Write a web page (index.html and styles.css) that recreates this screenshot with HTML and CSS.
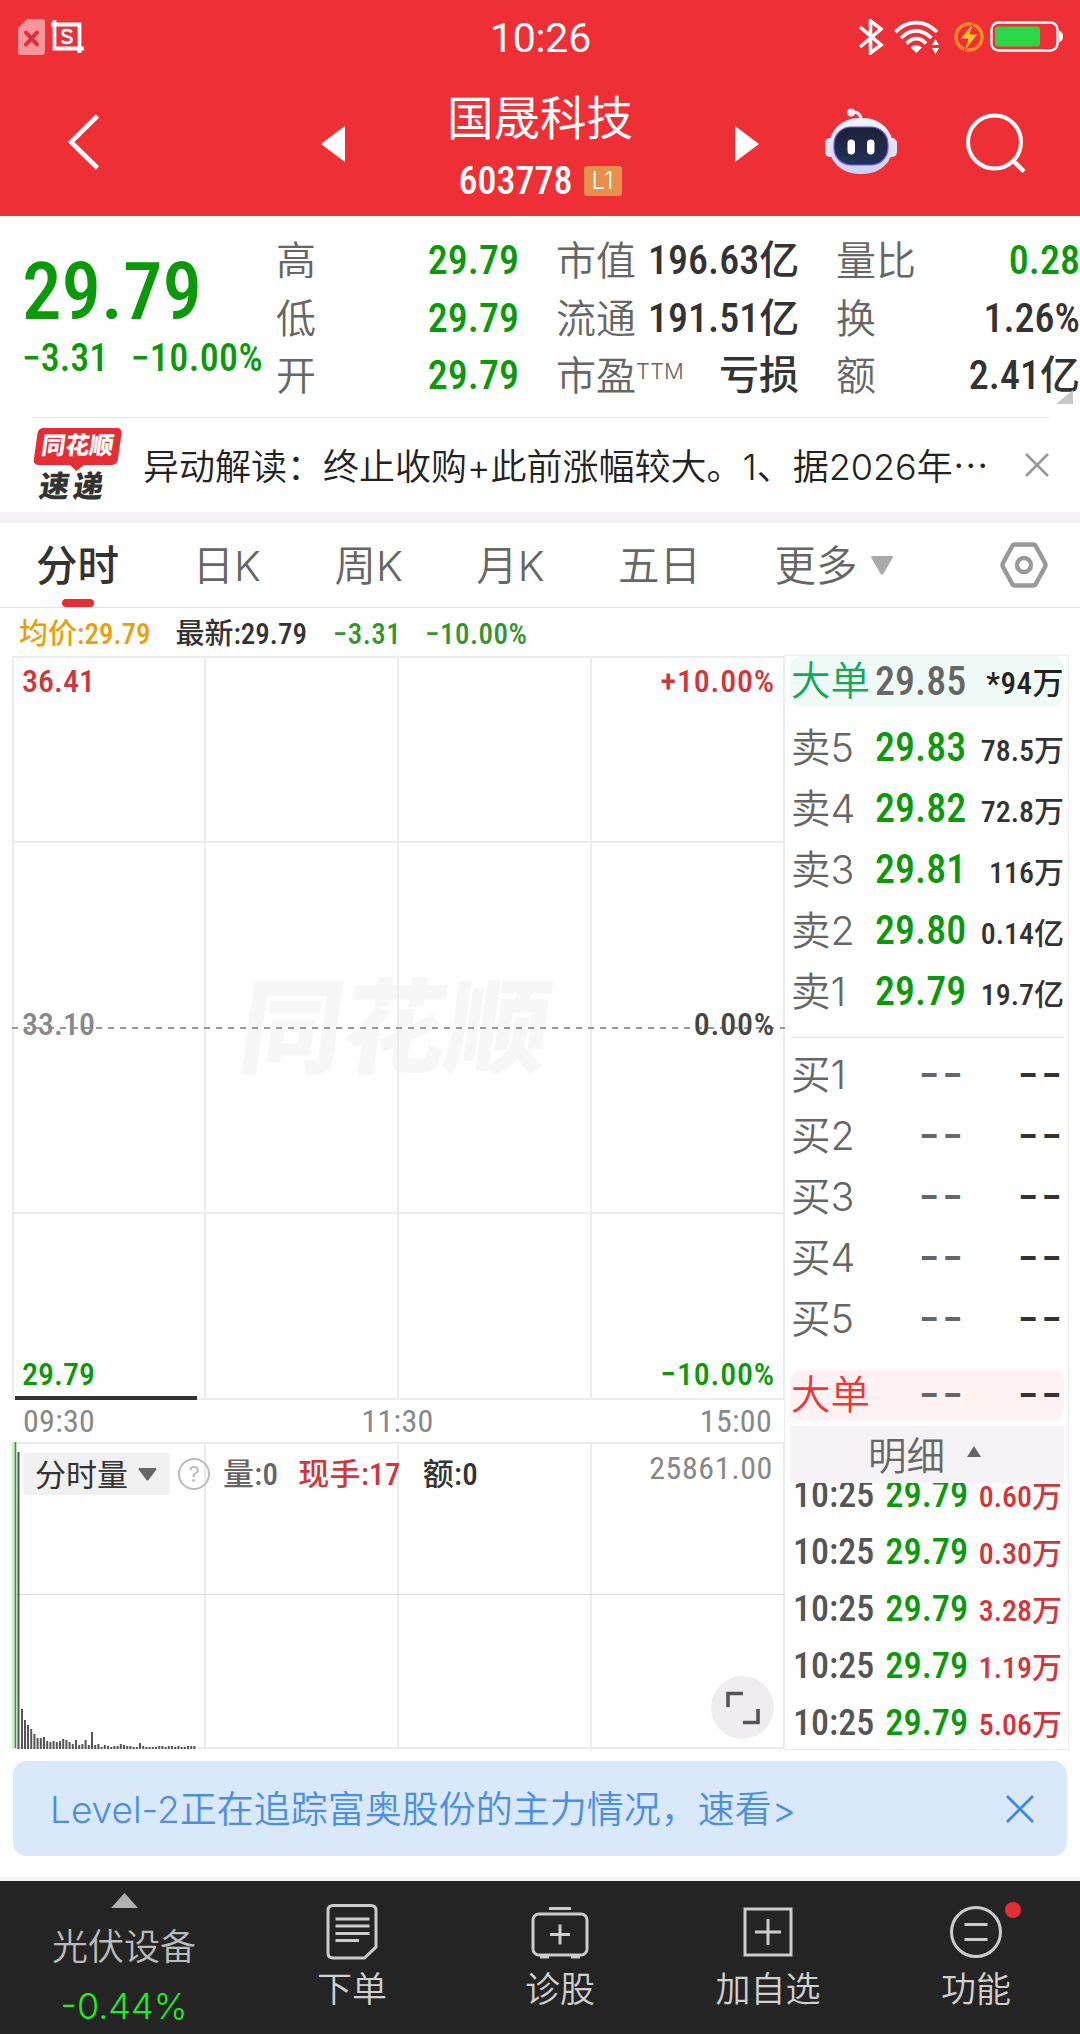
FILE: index.html
```html
<!DOCTYPE html>
<html lang="zh-CN">

<head>
    <meta charset="UTF-8">
    <title>国晟科技 603778</title>
    <link rel="stylesheet" href="styles.css">
</head>

<body>
    <header class="top">
        <div class="status">
            <div class="status-left">
                <svg width="27" height="36" viewBox="0 0 27 36">
                    <path d="M9 0H24a3 3 0 0 1 3 3V33a3 3 0 0 1-3 3H3a3 3 0 0 1-3-3V9z" fill="#f9959a" />
                    <path d="M8 13.500L19 25.500M19 13.500L8 25.500" stroke="#e02c37" stroke-width="4" stroke-linecap="round" />
                </svg>
                <svg width="34" height="34" viewBox="0 0 34 34">
                    <path d="M3.500 0V28.500H33M0 4.500H28.500V33" fill="none" stroke="#fff" stroke-width="3.800" />
                    <path d="M20.500 12.500C19.500 9.500 11.500 9 11.500 13C11.500 17.500 20.500 15.500 20.500 19.500C20.500 24 12 23.500 11 20.500" fill="none" stroke="#fff" stroke-width="2.800" />
                </svg>
            </div>
            <div class="clock">10:26</div>
            <div class="status-right">
                <svg width="26" height="36" viewBox="0 0 26 36">
                    <path d="M2 8L23 26L12.500 34V2L23 10L2 28" fill="none" stroke="#fff" stroke-width="3.600" />
                </svg>
                <svg class="wifi" width="46" height="34" viewBox="0 0 46 34">
                    <g fill="none" stroke="#fff" stroke-width="3.600">
                        <path d="M1.500 12C13-.5 31-.5 43 12" />
                        <path d="M7 18C16 8.500 28 8.500 37.500 18" />
                        <path d="M12.500 23.500C19 17 26 17 32 23.500" />
                    </g>
                    <path d="M16.500 27.500Q22 23 28 27.500L22.300 33z" fill="#fff" />
                    <path d="M38 25L41.500 19L45 25zM38 28L41.500 34L45 28z" fill="#fff" />
                </svg>
                <svg class="bolt" width="30" height="32" viewBox="0 0 30 32">
                    <circle cx="15" cy="16" r="13" fill="none" stroke="#f98a26" stroke-width="3.500" />
                    <path d="M20 1L6 18H14L10 31L24 13H16z" fill="#ffc425" stroke="#ee2f36" stroke-width="1" />
                </svg>
                <svg width="73" height="32" viewBox="0 0 73 32">
                    <rect x="1.500" y="1.500" width="66" height="28" rx="7" fill="none" stroke="#fff" stroke-width="2.400" />
                    <rect x="5" y="5.500" width="45" height="20" rx="3" fill="#2bd744" />
                    <path d="M69 9.500Q73 11 73 15.500Q73 20 69 21.500z" fill="#fff" />
                </svg>
            </div>
        </div>
        <div class="nav">
            <svg class="back" width="32" height="56" viewBox="0 0 32 56">
                <path d="M29.500 2L3 28L29.500 54" fill="none" stroke="#fff" stroke-width="4.600" />
            </svg>
            <svg class="prev" width="24" height="36" viewBox="0 0 24 36">
                <path d="M24 0V36L0 18z" fill="#fff" />
            </svg>
            <div class="stock">
                <h1 class="name">国晟科技</h1>
                <div class="code"><span class="num">603778</span><span class="level">L1</span></div>
            </div>
            <svg class="next" width="24" height="36" viewBox="0 0 24 36">
                <path d="M0 0V36L24 18z" fill="#fff" />
            </svg>
            <svg class="robot" width="72" height="67" viewBox="0 0 72 67">
                <defs>
                    <linearGradient id="shell" x1="0" y1="0" x2="0" y2="1">
                        <stop offset="0" stop-color="#f6f3fc" />
                        <stop offset="1" stop-color="#ccd0f4" />
                    </linearGradient>
                    <linearGradient id="face" x1="0" y1="0" x2="0" y2="1">
                        <stop offset="0" stop-color="#1e2038" />
                        <stop offset="1" stop-color="#22305a" />
                    </linearGradient>
                </defs>
                <circle cx="26" cy="4.500" r="4" fill="#f3ecf8" />
                <path d="M27 4Q35 3 36.500 12" fill="none" stroke="#f3ecf8" stroke-width="3" />
                <rect x="0" y="30" width="12" height="19" rx="5" fill="#e6e3f7" />
                <rect x="60" y="30" width="12" height="19" rx="5" fill="#e6e3f7" />
                <rect x="4" y="10" width="64" height="56" rx="29" fill="url(#shell)" />
                <rect x="9" y="19" width="54" height="38" rx="17" fill="url(#face)" stroke="#7261d8" stroke-width="1.200" />
                <rect x="22.500" y="31.500" width="7.500" height="15" rx="3.700" fill="#fff" />
                <rect x="42" y="31.500" width="7.500" height="15" rx="3.700" fill="#fff" />
            </svg>
            <svg class="search" width="60" height="60" viewBox="0 0 60 60">
                <circle cx="28.500" cy="29" r="26.500" fill="none" stroke="#fff" stroke-width="4" />
                <path d="M47 47.500L58 58.500" stroke="#fff" stroke-width="4.500" />
            </svg>
        </div>
    </header>

    <section class="quote">
        <div class="price">
            <div class="last num">29.79</div>
            <div class="change num"><span>−3.31</span><span>−10.00%</span></div>
        </div>
        <dl class="stats">
            <dt>高</dt><dd class="down">29.79</dd>
            <dt>市值</dt><dd>196.63亿</dd>
            <dt>量比</dt><dd class="down">0.28</dd>
            <dt>低</dt><dd class="down">29.79</dd>
            <dt>流通</dt><dd>191.51亿</dd>
            <dt>换</dt><dd>1.26%</dd>
            <dt>开</dt><dd class="down">29.79</dd>
            <dt>市盈<span class="ttm">TTM</span></dt><dd>亏损</dd>
            <dt>额</dt><dd>2.41亿</dd>
        </dl>
        <svg class="corner" width="17" height="14" viewBox="0 0 17 14">
            <path d="M17 0V14H0z" fill="#c8c8c8" />
        </svg>
    </section>

    <section class="news">
        <div class="news-logo">
            <div class="bubble">同花顺</div>
            <div class="express">速递</div>
        </div>
        <p class="news-text">异动解读：终止收购+此前涨幅较大。1、据2026年<span class="dots">…</span></p>
        <svg class="news-close" width="24" height="24" viewBox="0 0 24 24">
            <path d="M1 1L23 23M23 1L1 23" stroke="#999" stroke-width="2.600" />
        </svg>
    </section>

    <nav class="tabs">
        <div class="tab active">分时</div>
        <div class="tab">日K</div>
        <div class="tab">周K</div>
        <div class="tab">月K</div>
        <div class="tab">五日</div>
        <div class="tab">更多</div>
        <svg class="more" width="24" height="19" viewBox="0 0 24 19">
            <path d="M2 1H22L12.800 17Q12 18.500 11.200 17z" fill="#aaa" stroke="#aaa" stroke-width="2" stroke-linejoin="round" />
        </svg>
        <svg class="setting" width="48" height="46" viewBox="0 0 48 46">
            <path d="M15 2.500H33Q35 2.500 36 4.500L45 21Q46 23 45 25L36 41.500Q35 43.500 33 43.500H15Q13 43.500 12 41.500L3 25Q2 23 3 21L12 4.500Q13 2.500 15 2.500z" fill="none" stroke="#999" stroke-width="4.400" />
            <circle cx="24" cy="23" r="7" fill="none" stroke="#999" stroke-width="4.400" />
        </svg>
    </nav>

    <main class="board">
        <div class="charts">
            <div class="legend">
                <span class="avg">均价:29.79</span>
                <span class="latest">最新:29.79</span>
                <span class="diff">−3.31</span>
                <span class="diff">−10.00%</span>
            </div>
            <div class="chart minute">
                <svg class="lines" width="774" height="744" viewBox="0 0 774 744">
                    <path d="M1 0V744M193 0V744M386 0V744M579 0V744M772 0V744M0 1H773M0 186H773M0 557H773M0 743H773" stroke="#ececec" stroke-width="2" />
                    <path d="M0 372H773" stroke="#999" stroke-width="2" stroke-dasharray="6 6" />
                    <path d="M3 742H185" stroke="#333" stroke-width="4" />
                </svg>
                <div class="watermark">同花顺</div>
                <div class="scale up"><span>36.41</span><span>+10.00%</span></div>
                <div class="scale mid"><span class="base">33.10</span><span>0.00%</span></div>
                <div class="scale down"><span>29.79</span><span>−10.00%</span></div>
            </div>
            <div class="times"><span>09:30</span><span>11:30</span><span>15:00</span></div>
            <div class="chart volume">
                <svg class="lines" width="774" height="308" viewBox="0 0 774 308">
                    <path d="M1 0V308M193 0V308M386 0V308M579 0V308M772 0V308M0 1H773M0 306H773" stroke="#ececec" stroke-width="2" />
                    <path d="M0 152.500H773" stroke="#ddd" stroke-width="1" />
                    <path d="M2 0V306" stroke="#c4f5b8" stroke-width="4" />
                    <path d="M3.500 0V306" stroke="#3d8f3d" stroke-width="1.600" />
                    <path d="M6.500 10V307M10 267v40M13 278v29M16 283v24M19.200 287v20M22.400 292v15M25.600 296v11M28.800 296v11M32 295v12M35.200 299v8M38.400 300v7M41.600 299v8M44.800 300v7M48 299v8M51.200 297v10M54.400 298v9M57.600 300v7M60.800 302v5M64 298v9M67.200 303v4M70.400 302v5M73.600 298v9M76.800 303v4M80 290v17M83.200 303v4M86.400 302v5M89.600 305v2M92.800 303v4M96 304v3M99.200 305v2M102.400 304v3M105.600 304v3M108.800 302v5M112 303v4M115.200 304v3M118.400 304v3M121.600 305v2M124.800 305v2M128 301v6M131.200 304v3M134.400 305v2M137.600 305v2M140.800 305v2M144 305v2M147.200 304v3M150.400 304v3M153.600 305v2M156.800 304v3M160 304v3M163.200 305v2M166.400 304v3M169.600 305v2M172.800 305v2M176 304v3M179.200 304v3M182.400 304v3" stroke="#555" stroke-width="2" />
                </svg>
                <div class="volume-head">
                    <div class="picker">分时量<svg width="19" height="13" viewBox="0 0 19 13">
                            <path d="M1 0H18Q19 1 18 2L10.500 12Q9.500 13 8.500 12L1 2Q0 1 1 0z" fill="#666" />
                        </svg></div>
                    <div class="help">?</div>
                    <span class="amount">量:0</span>
                    <span class="hand">现手:17</span>
                    <span class="total">额:0</span>
                    <span class="max">25861.00</span>
                </div>
                <div class="expand">
                    <svg width="34" height="34" viewBox="0 0 34 34">
                        <path d="M2 16V2.500H17M32 18V31.500H17" fill="none" stroke="#555" stroke-width="3.600" />
                    </svg>
                </div>
            </div>
        </div>

        <aside class="book">
            <div class="row big sell"><span>大单</span><b>29.85</b><i>*94万</i></div>
            <div class="asks">
                <div class="row"><span>卖5</span><b>29.83</b><i>78.5万</i></div>
                <div class="row"><span>卖4</span><b>29.82</b><i>72.8万</i></div>
                <div class="row"><span>卖3</span><b>29.81</b><i>116万</i></div>
                <div class="row"><span>卖2</span><b>29.80</b><i>0.14亿</i></div>
                <div class="row"><span>卖1</span><b>29.79</b><i>19.7亿</i></div>
            </div>
            <div class="bids">
                <div class="row none"><span>买1</span><b>−−</b><i>−−</i></div>
                <div class="row none"><span>买2</span><b>−−</b><i>−−</i></div>
                <div class="row none"><span>买3</span><b>−−</b><i>−−</i></div>
                <div class="row none"><span>买4</span><b>−−</b><i>−−</i></div>
                <div class="row none"><span>买5</span><b>−−</b><i>−−</i></div>
            </div>
            <div class="row none big buy"><span>大单</span><b>−−</b><i>−−</i></div>
            <div class="detail">明细<svg width="14" height="11" viewBox="0 0 14 11">
                    <path d="M7 0L14 11H0z" fill="#666" />
                </svg></div>
            <div class="deals">
                <div class="deal"><span>10:25</span><b>29.79</b><i>0.60万</i></div>
                <div class="deal"><span>10:25</span><b>29.79</b><i>0.30万</i></div>
                <div class="deal"><span>10:25</span><b>29.79</b><i>3.28万</i></div>
                <div class="deal"><span>10:25</span><b>29.79</b><i>1.19万</i></div>
                <div class="deal"><span>10:25</span><b>29.79</b><i>5.06万</i></div>
            </div>
        </aside>
    </main>

    <div class="banner">
        <span>Level-2正在追踪富奥股份的主力情况，速看&gt;</span>
        <svg width="28" height="28" viewBox="0 0 28 28">
            <path d="M1 1L27 27M27 1L1 27" stroke="#3f86e4" stroke-width="2.800" />
        </svg>
    </div>

    <footer class="bottom">
        <div class="sector">
            <svg width="27" height="15" viewBox="0 0 27 15">
                <path d="M13.500 0L27 15H0z" fill="#b0b0b0" />
            </svg>
            <div class="sector-name">光伏设备</div>
            <div class="sector-rate">-0.44%</div>
        </div>
        <div class="item">
            <svg width="56" height="56" viewBox="0 0 56 56">
                <path d="M9 1.500H47Q52 1.500 52 6.500V43L40.500 54H9Q4 54 4 49V6.500Q4 1.500 9 1.500z" />
                <path d="M11.500 15H45.500M11.500 22H45.500M11.500 29.500H45.500M11.500 36.500H35" />
            </svg>
            <span>下单</span>
        </div>
        <div class="item">
            <svg width="60" height="56" viewBox="0 0 60 56">
                <rect x="3" y="10" width="54" height="41" rx="6" />
                <path d="M19 4.500H41M30 20.500V40.500M20 30.500H40M10 53H19M41 53H50" />
            </svg>
            <span>诊股</span>
        </div>
        <div class="item">
            <svg width="56" height="56" viewBox="0 0 56 56">
                <rect x="5" y="5" width="46" height="46" />
                <path d="M28 15V41M15 28H41" />
            </svg>
            <span>加自选</span>
        </div>
        <div class="item">
            <svg width="56" height="56" viewBox="0 0 56 56">
                <circle cx="28" cy="28" r="24.500" />
                <path d="M16.500 20.500H39.500M16.500 35.500H39.500" />
            </svg>
            <span>功能</span>
            <div class="dot"></div>
        </div>
    </footer>
</body>

</html>
```
FILE: styles.css
```css
* {
    box-sizing: border-box;
}

body {
    margin: 0;
    width: 1080px;
    height: 2034px;
    overflow: hidden;
    background: #fff;
    color: #333;
    font-family: Inter, "Noto Sans CJK SC", sans-serif;
}

svg {
    display: block;
    flex: none;
}

b,
i {
    font-weight: inherit;
    font-style: normal;
}

.num,
.stats dd,
.legend,
.scale,
.times,
.volume-head,
.row b,
.row i,
.deal {
    font-family: "Roboto Condensed", "Noto Sans CJK SC", sans-serif;
    font-weight: 500;
}

/* header */
.top {
    height: 216px;
    background: #ee2f36;
    color: #fff;
}

.status {
    height: 75px;
    padding: 0 17px 0 18px;
    display: grid;
    grid-template-columns: 1fr auto 1fr;
    align-items: center;
}

.status-left,
.status-right {
    display: flex;
    align-items: center;
    gap: 6px;
    margin-top: -2px;
}

.status-right {
    justify-content: flex-end;
}

.wifi {
    margin-left: 4px;
}

.bolt {
    margin-left: 8px;
}

.clock {
    font-family: Roboto;
    font-size: 41px;
    letter-spacing: -.2px;
}

.nav {
    height: 141px;
    display: flex;
    align-items: flex-start;
}

.back {
    margin: 39px 0 0 68px;
}

.prev {
    margin: 51px 0 0 221px;
}

.stock {
    width: 390px;
    text-align: center;
}

.name {
    margin: 12px 0 0;
    font-size: 46.500px;
    font-weight: 400;
    line-height: 62px;
}

.code {
    display: flex;
    justify-content: center;
    align-items: center;
    gap: 11px;
    height: 34px;
    margin-top: 15px;
    font-size: 38px;
}

.level {
    width: 38px;
    height: 30px;
    border-radius: 3px;
    background: #e88f4d;
    font-size: 24px;
    font-weight: 300;
    line-height: 30px;
}

.next {
    margin-top: 51px;
}

.robot {
    margin: 33px 0 0 66px;
}

.search {
    margin: 38px 0 0 69px;
}

/* quote */
.quote {
    position: relative;
    height: 201px;
    display: flex;
}

.price {
    width: 276px;
    padding: 34px 0 0 22px;
    color: #099909;
}

.last {
    font-size: 79px;
    line-height: 84px;
}

.change {
    display: flex;
    justify-content: space-between;
    width: 241px;
    margin-top: 4px;
    font-size: 38px;
    line-height: 40px;
}

.change span + span {
    letter-spacing: .4px;
}

.stats {
    flex: 1;
    display: grid;
    grid-template-columns: 90px 153px 129px 151px 126px 1fr;
    grid-auto-rows: 57.500px;
    margin: 16px 0 0;
    line-height: 57px;
    font-size: 40px;
}

.stats dt {
    color: #666;
    font-weight: 350;
    white-space: nowrap;
}

.stats dt:nth-of-type(3n + 2) {
    margin-left: 37px;
}

.stats dt:nth-of-type(3n) {
    margin-left: 37px;
}

.stats dd {
    margin: 0;
    text-align: right;
    white-space: nowrap;
}

.stats .down {
    color: #099909;
}

.ttm {
    font-size: 22px;
    line-height: 0;
    vertical-align: 11px;
}

.corner {
    position: absolute;
    right: 7px;
    bottom: 13px;
}

/* news */
.news {
    height: 95px;
    margin: 0 31px 0 32px;
    border-top: 1px solid #e6e6e6;
    display: flex;
    align-items: center;
}

.news-logo {
    width: 84px;
    margin-left: 1px;
    text-align: center;
    font-weight: 900;
    font-size: 24px;
    transform: skewX(-8deg);
}

.bubble {
    position: relative;
    height: 37px;
    border-radius: 5px;
    background: #e62d33;
    color: #fff;
    line-height: 36px;
}

.bubble::after {
    content: "";
    position: absolute;
    left: 37px;
    top: 37px;
    border: 7px solid transparent;
    border-top: 6px solid #e62d33;
}

.express {
    margin-top: 4px;
    padding-left: 3px;
    font-size: 30px;
    line-height: 34px;
    letter-spacing: 4px;
}

.news-text {
    margin: -3px 0 0 26px;
    font-size: 36px;
    font-weight: 350;
    white-space: nowrap;
    color: #222;
}

.dots {
    font-family: "Noto Sans CJK SC";
}

.news-close {
    margin-left: auto;
}

/* tabs */
.tabs {
    height: 96px;
    display: flex;
    align-items: center;
    border-top: 11px solid #f5f3f5;
    border-bottom: 1px solid #e3e3e3;
    font-size: 41.500px;
    font-weight: 350;
    color: #666;
}

.tab {
    position: relative;
    height: 84px;
    line-height: 87px;
    margin-left: 73.500px;
    white-space: nowrap;
}

.tab.active {
    margin-left: 36px;
    color: #333;
    font-weight: 500;
}

.tab.active::after {
    content: "";
    position: absolute;
    left: 26px;
    bottom: 0;
    width: 32px;
    height: 8px;
    border-radius: 4px;
    background: #e62d33;
}

.more {
    margin-left: 12px;
}

.setting {
    margin: 0 32px 0 auto;
}

/* charts */
.board {
    display: flex;
    height: 1153px;
}

.charts {
    width: 784px;
    padding-left: 12px;
}

.legend {
    display: flex;
    height: 48px;
    padding-left: 7px;
    line-height: 52px;
    font-size: 29px;
    color: #333;
}

.legend span {
    margin-right: 26px;
}

.legend .avg {
    color: #e8a010;
    margin-right: 25px;
}

.legend .diff {
    color: #35952c;
    letter-spacing: .5px;
    margin-right: 24px;
}

.chart {
    position: relative;
}

.lines {
    position: absolute;
    left: 0;
    top: 0;
}

.minute {
    height: 744px;
    display: flex;
    flex-direction: column;
    justify-content: space-between;
    padding: 5px 9px 6px 10px;
}

.watermark {
    position: absolute;
    left: 229px;
    top: 312px;
    font-size: 103px;
    font-weight: 900;
    line-height: 120px;
    color: #f7f7f7;
    transform: skewX(-8deg);
    z-index: -1;
}

.scale {
    position: relative;
    display: flex;
    justify-content: space-between;
    font-size: 32px;
    line-height: 40px;
}

.scale span + span {
    letter-spacing: .8px;
}

.up {
    color: #d2353b;
}

.mid {
    color: #444;
    top: -4px;
}

.base {
    color: #888;
}

.scale.down {
    color: #099909;
}

.times {
    display: flex;
    justify-content: space-between;
    height: 43px;
    padding: 0 12px 0 11px;
    font-size: 32px;
    font-weight: 400;
    line-height: 43px;
    letter-spacing: .3px;
    color: #888;
}

.volume {
    height: 308px;
    margin-top: -1px;
    padding: 11px 11px 0;
}

.volume-head {
    position: relative;
    display: flex;
    align-items: center;
    height: 42px;
    font-size: 31px;
    white-space: nowrap;
}

.picker {
    display: flex;
    align-items: center;
    justify-content: space-between;
    width: 147px;
    height: 42px;
    padding: 0 13px 4px 12px;
    border-radius: 4px;
    background: #f1f1f1;
    font-weight: 400;
}

.picker svg {
    margin-top: 4px;
}

.help {
    width: 32px;
    height: 32px;
    margin: 0 13px 0 8px;
    border: 2.500px solid #bbb;
    border-radius: 50%;
    color: #bbb;
    font-family: Inter;
    font-size: 22px;
    font-weight: 400;
    line-height: 28px;
    text-align: center;
}

.amount,
.hand,
.total {
    margin-top: -6px;
    letter-spacing: .3px;
}

.amount {
    color: #666;
}

.hand {
    margin-left: 20px;
    margin-right: 22px;
    color: #d2353b;
}

.max {
    margin: -12px 0 0 auto;
    font-size: 32px;
    font-weight: 400;
    letter-spacing: .6px;
    color: #888;
}

.expand {
    position: absolute;
    right: 10px;
    bottom: 11px;
    width: 63px;
    height: 63px;
    border-radius: 50%;
    background: #efedef;
    display: grid;
    place-items: center;
}

/* order book */
.book {
    width: 285px;
    margin-top: 47px;
    height: 1095px;
    padding: 0 4px 0 5px;
    border: 1px solid #ececec;
    overflow: hidden;
}

.row {
    display: flex;
    align-items: center;
    height: 61px;
    padding: 0 1px 0 1px;
    font-size: 40px;
    white-space: nowrap;
}

.row span {
    width: 84px;
    margin-top: -6px;
    color: #666;
    font-weight: 350;
    font-size: 39.500px;
}

.row b {
    color: #099909;
    line-height: 61px;
}

.row i {
    margin: 1px -1px 0 auto;
    font-size: 30px;
}

.big {
    height: 51px;
    border-radius: 12px;
}

.big span {
    margin-top: -9px;
}

.big b {
    margin-top: -1px;
}

.sell {
    background: #f0faf6;
}

.big.sell span {
    color: #12a95c;
}

.big.sell b {
    color: #666;
}

.big.sell i {
    margin-top: -2px;
    color: #222;
    font-size: 31px;
    letter-spacing: .5px;
}

.asks {
    padding: 10px 0 15px;
    border-bottom: 1px solid #e6e6e6;
}

.bids {
    padding: 7px 0 20px;
}

.bids .row span {
    margin-top: -8px;
}

.none b {
    width: 91px;
    text-align: right;
    color: #666;
}

.none b,
.none i {
    margin-top: 0;
    font-size: 42px;
    line-height: 51px;
    letter-spacing: 3px;
}

.none i {
    margin-right: -2px;
}

.buy {
    background: #fef2f4;
}

.big.buy span {
    color: #e83a36;
}

.detail {
    height: 57px;
    margin-top: 5px;
    display: flex;
    align-items: center;
    justify-content: center;
    gap: 22px;
    padding: 0 5px 3px 0;
    background: #f5f3f5;
    color: #666;
    font-size: 38.500px;
    font-weight: 350;
}

.detail svg {
    margin-top: -3px;
}

.deals {
    height: 268px;
    overflow: hidden;
    display: flex;
    flex-direction: column;
    justify-content: flex-end;
}

.deal {
    flex: none;
    display: flex;
    align-items: baseline;
    height: 57px;
    line-height: 57px;
    padding: 0 2px 0 3px;
    font-size: 36px;
    color: #555;
    white-space: nowrap;
}

.deal b {
    margin-left: 11px;
    font-size: 36.500px;
    color: #099909;
}

.deal i {
    margin-left: auto;
    font-size: 30px;
    color: #d2353b;
}

/* banner */
.banner {
    display: flex;
    align-items: center;
    justify-content: space-between;
    height: 95px;
    margin: 0 13px;
    padding: 0 33px 0 37px;
    border-radius: 14px;
    background: #dae8fb;
    color: #4a8fe4;
    font-size: 37px;
    font-weight: 350;
}

.banner span {
    margin-top: -3px;
}

/* bottom bar */
.bottom {
    display: flex;
    height: 157px;
    margin-top: 21px;
    border-top: 4px solid #f5f5f5;
    background: #242424;
    color: #d0d0d0;
    font-weight: 350;
}

.sector {
    width: 248px;
    display: flex;
    flex-direction: column;
    align-items: center;
    padding-top: 12px;
}

.sector-name {
    margin-top: 17px;
    font-size: 36px;
    line-height: 44px;
    color: #bbb;
}

.sector-rate {
    margin-top: 15px;
    font-size: 36px;
    line-height: 44px;
    color: #20f020;
}

.item {
    position: relative;
    width: 208px;
    display: flex;
    flex-direction: column;
    align-items: center;
    padding-top: 23px;
    font-size: 35px;
    line-height: 44px;
}

.item svg {
    fill: none;
    stroke: #ccc;
    stroke-width: 3;
}

.item span {
    margin-top: 7px;
}

.dot {
    position: absolute;
    left: 133px;
    top: 21px;
    width: 16px;
    height: 16px;
    border-radius: 50%;
    background: #e62d33;
}
```
